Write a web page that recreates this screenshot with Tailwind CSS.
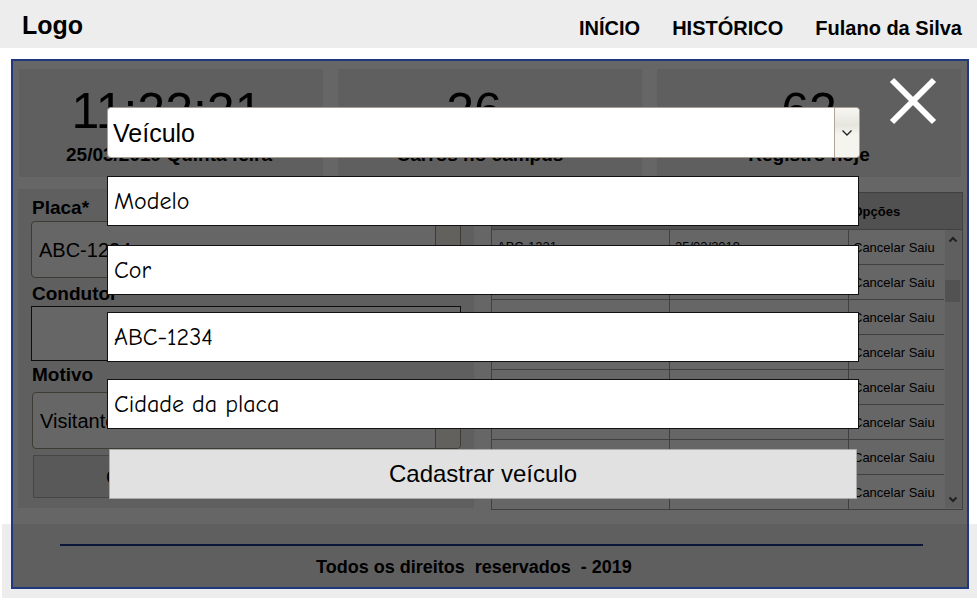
<!DOCTYPE html>
<html lang="pt-BR">
<head>
<meta charset="utf-8">
<meta name="viewport" content="width=device-width, initial-scale=1">
<title>Cadastro de veículo</title>
<script src="https://cdn.jsdelivr.net/npm/@tailwindcss/browser@4"></script>
</head>
<body class="bg-white font-['Liberation_Sans',Arial,sans-serif] text-black">
<header class="flex h-12 items-center justify-between bg-[#ededed] pr-[15px] pl-[22px] font-bold">
  <a href="#" class="pt-[2px] pb-px text-[25px] leading-8">Logo</a>
  <nav class="flex gap-8 pt-2 text-xl leading-6">
    <a href="#">INÍCIO</a><a href="#">HISTÓRICO</a><a href="#">Fulano da Silva</a>
  </nav>
</header>

<div class="relative pt-[21px]">
  <main class="pb-[14px]">
    <section class="grid grid-cols-3 gap-[15px] pr-4 pl-[19px] text-center">
      <div class="h-[108px] bg-[#ededed] pt-[15px] pr-1"><p class="pr-1 text-[50px] leading-[54px]">11:22:21</p><p class="pt-[5px] text-[19px] leading-6 font-bold">25/03/2019 Quinta feira</p></div>
      <div class="h-[108px] bg-[#ededed] pt-[15px] pr-5"><p class="pr-3 text-[50px] leading-[54px]">26</p><p class="pt-[5px] text-[19px] leading-6 font-bold">Carros no campus</p></div>
      <div class="h-[108px] bg-[#ededed] pt-[15px]"><p class="text-[50px] leading-[54px]">62</p><p class="pt-[5px] text-[19px] leading-6 font-bold">Registro hoje</p></div>
    </section>

    <div class="mt-3 grid grid-cols-[456fr_472fr] items-start gap-[17px] pr-[14px] pl-[18px]">
      <form class="min-w-0 bg-[#ededed] pt-[6px] pr-[13px] pb-[10px] pl-[14px]">
        <label for="placa" class="block text-[19px] leading-[26px] font-bold">Placa*</label>
        <div class="relative -ml-px h-[57px]">
          <select id="placa" class="size-full appearance-none rounded border border-[#9c9283] bg-white pl-[7px] text-xl"><option>ABC-1234</option></select>
          <span class="pointer-events-none absolute inset-y-px right-px w-[25px] rounded-r border-l border-[#9c9283] bg-[#f4f2ea]"></span>
        </div>
        <label for="condutor" class="block pt-[3px] text-[19px] leading-[25px] font-bold">Condutor</label>
        <input id="condutor" type="text" class="-ml-px block h-[55px] w-[calc(100%+1px)] border border-[#222] bg-white px-2 text-xl">
        <label for="motivo" class="block pt-px text-[19px] leading-[26px] font-bold">Motivo</label>
        <div class="relative mt-[4px] h-[57px]">
          <select id="motivo" class="size-full appearance-none rounded border border-[#9c9283] bg-white pl-[7px] text-xl"><option>Visitante</option></select>
          <span class="pointer-events-none absolute inset-y-px right-px w-[25px] rounded-r border-l border-[#9c9283] bg-[#f4f2ea]"></span>
        </div>
        <button type="button" class="mt-[6px] ml-px block h-[43px] w-[calc(100%-1px)] border border-[#b0b0b0] bg-[#dedede] pl-[72px] text-left text-xl">Cadastrar entrada</button>
      </form>

      <div class="relative mt-[3px] min-w-0">
        <table class="w-full table-fixed border-collapse border border-[#a0a0a0] text-left text-[13px] leading-4">
          <colgroup><col class="w-[178px]"><col class="w-[179px]"><col></colgroup>
          <thead><tr class="h-[37px] border-b border-[#a0a0a0] bg-[#cbcbcb]"><th class="px-[5px] pt-[2px]">Placa</th><th class="px-[5px] pt-[2px]">Data</th><th class="px-[4px] pt-[2px]">Opções</th></tr></thead>
          <tbody>
            <tr class="h-[35px] border-b border-[#a0a0a0]"><td class="border-r border-[#a0a0a0] px-[5px]">ABC-1221</td><td class="border-r border-[#a0a0a0] px-[5px]">25/03/2019</td><td class="px-[4px] pt-[2px]">Cancelar Saiu</td></tr>
            <tr class="h-[35px] border-b border-[#a0a0a0]"><td class="border-r border-[#a0a0a0]"></td><td class="border-r border-[#a0a0a0]"></td><td class="px-[4px] pt-[2px]">Cancelar Saiu</td></tr>
            <tr class="h-[35px] border-b border-[#a0a0a0]"><td class="border-r border-[#a0a0a0]"></td><td class="border-r border-[#a0a0a0]"></td><td class="px-[4px] pt-[2px]">Cancelar Saiu</td></tr>
            <tr class="h-[35px] border-b border-[#a0a0a0]"><td class="border-r border-[#a0a0a0]"></td><td class="border-r border-[#a0a0a0]"></td><td class="px-[4px] pt-[2px]">Cancelar Saiu</td></tr>
            <tr class="h-[35px] border-b border-[#a0a0a0]"><td class="border-r border-[#a0a0a0]"></td><td class="border-r border-[#a0a0a0]"></td><td class="px-[4px] pt-[2px]">Cancelar Saiu</td></tr>
            <tr class="h-[35px] border-b border-[#a0a0a0]"><td class="border-r border-[#a0a0a0]"></td><td class="border-r border-[#a0a0a0]"></td><td class="px-[4px] pt-[2px]">Cancelar Saiu</td></tr>
            <tr class="h-[35px] border-b border-[#a0a0a0]"><td class="border-r border-[#a0a0a0]"></td><td class="border-r border-[#a0a0a0]"></td><td class="px-[4px] pt-[2px]">Cancelar Saiu</td></tr>
            <tr class="h-[35px] border-b border-[#a0a0a0]"><td class="border-r border-[#a0a0a0]"></td><td class="border-r border-[#a0a0a0]"></td><td class="px-[4px] pt-[2px]">Cancelar Saiu</td></tr>
          </tbody>
        </table>
        <div class="absolute top-[38px] right-px bottom-[2px] flex w-[18px] flex-col items-center border-l border-white bg-[#ededed] pr-[2px]">
          <svg class="mt-1 h-[10px] w-[10px] shrink-0" viewBox="0 0 10 10" fill="none" stroke="#505050" stroke-width="2"><path d="M1.500 7.500L5 4L8.500 7.500"/></svg>
          <span class="mt-[36px] h-[22px] w-full bg-[#cdcdcd]"></span>
          <svg class="mt-auto mb-[3px] h-[10px] w-[10px] shrink-0" viewBox="0 0 10 10" fill="none" stroke="#505050" stroke-width="2"><path d="M1.500 2.500L5 6L8.500 2.500"/></svg>
        </div>
      </div>
    </div>
  </main>

  <footer class="ml-[2px] h-[74px] bg-[#ededed] pt-5 pr-[54px] pl-[58px]">
    <p class="border-t-2 border-[#1f3a8c] pt-[9px] pr-[35px] text-center text-lg leading-6 font-bold whitespace-pre">Todos os direitos  reservados  - 2019</p>
  </footer>

  <div role="dialog" aria-label="Cadastrar veículo" class="absolute top-[11px] right-2 bottom-[9px] left-[11px] border-2 border-[#21387f] bg-black/60 bg-clip-padding pt-[46px] pr-[107px] pl-[94px]">
    <button type="button" aria-label="Fechar" class="absolute top-[15px] right-[29px] size-[50px]">
      <svg viewBox="0 0 50 50" class="size-full" fill="none" stroke="#fff" stroke-width="6"><path d="M4 4L46 46M46 4L4 46"/></svg>
    </button>
    <form>
      <div class="relative h-[51px]">
        <select aria-label="Veículo" class="size-full appearance-none rounded border border-[#a89f93] bg-white pt-[2px] pl-[5px] text-[25px]"><option>Veículo</option></select>
        <span class="pointer-events-none absolute inset-y-px right-px flex w-[25px] items-center justify-center rounded-r border-l border-[#b0a698] bg-linear-to-b from-[#f7f6f3] via-[#e7e5de] via-35% to-[#f5f4ef] to-55%">
          <svg class="h-[10px] w-[10px]" viewBox="0 0 10 10" fill="none" stroke="#222" stroke-width="1.300"><path d="M.5 2.500L5 7L9.500 2.500"/></svg>
        </span>
      </div>
      <div class="mt-[18px] mr-px flex flex-col gap-[17px] font-['Comic_Sans_MS','Comic_Neue','Noto_Sans',sans-serif]">
        <input type="text" aria-label="Modelo" value="Modelo" class="h-[50px] w-full border border-[#111] bg-white px-[6px] text-2xl">
        <input type="text" aria-label="Cor" value="Cor" class="mt-[2px] h-[50px] w-full border border-[#111] bg-white px-[6px] text-2xl">
        <input type="text" aria-label="Placa" value="ABC-1234" class="h-[50px] w-full border border-[#111] bg-white px-[6px] text-2xl">
        <input type="text" aria-label="Cidade da placa" value="Cidade da placa" class="h-[50px] w-full border border-[#111] bg-white px-[6px] text-2xl">
      </div>
      <div class="mt-5 mr-[3px] ml-[2px]"><button type="submit" class="block h-[50px] w-full border border-[#a9a9a9] bg-[#e1e1e1] text-2xl">Cadastrar veículo</button></div>
    </form>
  </div>
</div>
</body>
</html>
